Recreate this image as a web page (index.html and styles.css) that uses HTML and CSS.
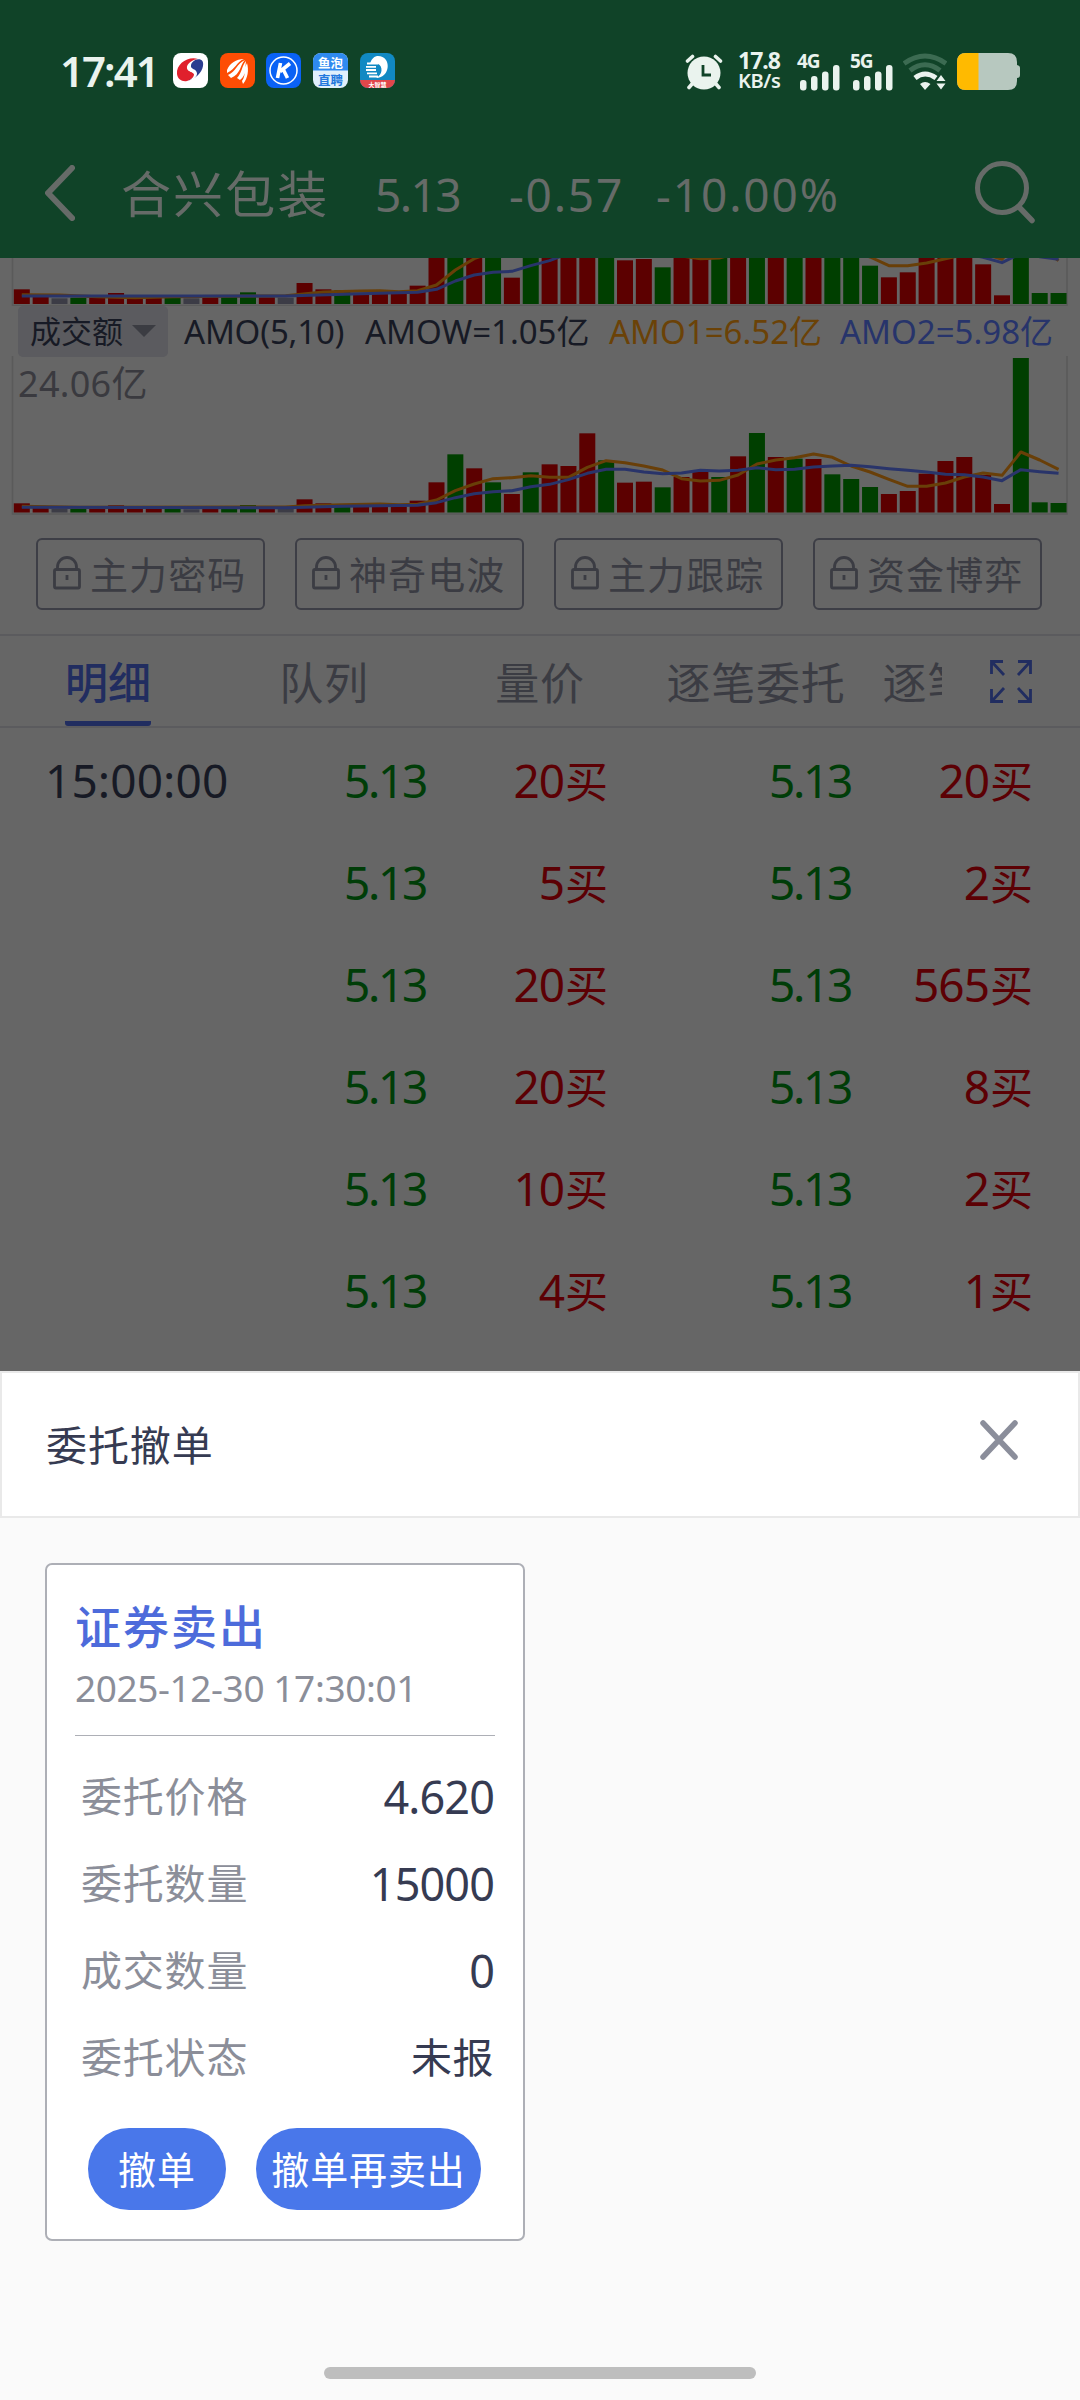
FILE: index.html
```html
<!DOCTYPE html>
<html lang="zh-CN">
<head>
<meta charset="utf-8">
<title>委托撤单</title>
<link rel="stylesheet" href="styles.css">
</head>
<body>
<svg width="0" height="0" class="defs">
  <symbol id="lock" viewBox="0 0 28 34">
    <rect x="1.5" y="13.5" width="25" height="18.5" rx="1.5" fill="none" stroke="currentColor" stroke-width="2.8"/>
    <path d="M4.5 13V11a9.5 9.5 0 0 1 19 0v2M14 19v5" fill="none" stroke="currentColor" stroke-width="2.8"/>
  </symbol>
  <symbol id="bars" viewBox="0 0 40 26">
    <g fill="#eaf3ee"><rect x="0" y="15" width="6.5" height="10.5" rx="3"/><rect x="11" y="11" width="6.5" height="14.5" rx="3"/><rect x="22" y="6.5" width="6.5" height="19" rx="3"/><rect x="33" y="0" width="6.5" height="25.5" rx="3"/></g>
  </symbol>
</svg>
<div class="screen">
  <header class="top">
    <div class="status">
      <div class="status-left">
        <span class="clock">17:41</span>
        <div class="apps">
          <svg class="app" viewBox="0 0 35 35"><rect width="35" height="35" rx="8" fill="#fff"/><path d="M25 6C15 3 3 11 4 21c.5 5 5 8 10 7 5-1 8-4 7-7-1-2-6-3-6-6 0-4 5-7 10-9z" fill="#e0202c"/><path d="M22 7c6-2 9 1 8 6-1 7-8 13-16 15 5-2 9-5 8-8-1-3-7-2-7-6 0-3 3-5 7-7z" fill="#2b3d8f"/><path d="M26 5.500c-6 1-13 5-12 10 1 4 7 3 7 6 0 3-4 6-8 7 6-1 11-4 11-8 0-5-7-4-6-8 0-3 4-6 8-7z" fill="#fff"/></svg>
          <svg class="app" viewBox="0 0 35 35"><rect width="35" height="35" rx="8" fill="#fd4d04"/><path d="M7 17C10 10 16 6 24 6 16 9 16 16 7 20zM8 22c8-3 9-12 17-15-5 5-4 14-14 18zM17 25c5-5 5-13 9-17-1 6 1 14-6 19zM22 28c4-5 2-13 5-18 2 7 1 15-4 21z" fill="#fff"/></svg>
          <svg class="app" viewBox="0 0 35 35"><rect width="35" height="35" rx="8" fill="#0a62f5"/><circle cx="17.5" cy="17.5" r="13.5" fill="none" stroke="#fff" stroke-width="1.5"/><path d="M14.5 10l-3 15M24 10.500l-10 8M17 16l4.500 9" fill="none" stroke="#fff" stroke-width="3.6"/></svg>
          <svg class="app" viewBox="0 0 35 35"><rect width="35" height="35" rx="8" fill="#e0effc"/><path d="M0 17.500V8a8 8 0 0 1 8-8h19a8 8 0 0 1 8 8v9.500z" fill="#2f8af0"/><text x="17.5" y="14.5" class="app-text" fill="#fff">鱼泡</text><text x="17.5" y="31.5" class="app-text" fill="#2378de">直聘</text></svg>
          <svg class="app" viewBox="0 0 35 35"><rect width="35" height="35" rx="8" fill="#1189c3"/><path d="M0 27h35a8 8 0 0 1-8 8H8a8 8 0 0 1-8-8z" fill="#e2474b"/><path d="M17 3c15-1 14 22-1 22 7-3 7-12 2-14h-8c1-4 3-7 7-8z" fill="#fff"/><path d="M7 10.500h11M6 13.800h10M6 17h10M7 20.300h10M9 23.500h9" stroke="#fff" stroke-width="1.8"/><text x="17.5" y="33.5" class="app-tiny" fill="#fff">大智慧</text></svg>
        </div>
      </div>
      <div class="status-right">
        <svg width="38" height="38" viewBox="0 0 38 38"><g stroke="#eaf3ee" stroke-width="3.6" stroke-linecap="round"><path d="M2.5 8l5-4.500M35.500 8l-5-4.500M7 31l-3 3.500M31 31l3 3.500"/></g><circle cx="19" cy="20" r="16.5" fill="#eaf3ee"/><path d="M18 12v10h8" fill="none" stroke="#104328" stroke-width="2.8"/></svg>
        <div class="speed"><span>17.8</span><span class="unit">KB/s</span></div>
        <div class="cell"><span>4G</span><svg width="40" height="26"><use href="#bars"/></svg></div>
        <div class="cell"><span>5G</span><svg width="40" height="26"><use href="#bars"/></svg></div>
        <svg class="wifi" width="44" height="37" viewBox="0 0 44 37"><g fill="none" stroke-width="5"><path d="M1 10.500Q22-4.500 43 10.500" stroke="#3c6b52"/><path d="M7 17.500Q22 6 37 17.500" stroke="#3c6b52"/><path d="M12 25Q22 17 33 25" stroke="#eaf3ee"/></g><path d="M17 31q5-4 10.500 0L22 37zM33.500 28l4.500-6 4.500 6zM33.500 30.500l4.500 6 4.500-6z" fill="#eaf3ee"/></svg>
        <svg width="63" height="37" viewBox="0 0 63 37"><path d="M9 0h42q9 0 9 9v3q3 .5 3 3v7q0 3-3 3v3q0 9-9 9H9q-9 0-9-9V9Q0 0 9 0z" fill="#b7c8bf"/><path d="M21.500 0H9Q0 0 0 9v19q0 9 9 9h12.500z" fill="#ffba00"/></svg>
      </div>
    </div>
    <div class="nav">
      <svg class="back" width="30" height="56" viewBox="0 0 30 56"><path d="M27 3L3 28l24 25" fill="none" stroke="#666b68" stroke-width="6" stroke-linecap="round" stroke-linejoin="round"/></svg>
      <span class="stock">合兴包装</span>
      <span class="num price">5.13</span>
      <span class="num change">-0.57</span>
      <span class="num percent">-10.00%</span>
      <svg class="search" width="62" height="64" viewBox="0 0 62 64"><circle cx="28" cy="28" r="24.5" fill="none" stroke="#666b68" stroke-width="5"/><path d="M45 47l13 13.500" stroke="#666b68" stroke-width="5.5" stroke-linecap="round"/></svg>
    </div>
  </header>

  <main class="page">
    <section class="charts">
      <svg id="volume" width="1080" height="48" viewBox="0 258 1080 48"></svg>
      <div class="legend">
        <div class="picker">成交额<i class="caret"></i></div>
        <span class="l1">AMO(5,10)</span>
        <span class="l2">AMOW=1.05亿</span>
        <span class="l3">AMO1=6.52亿</span>
        <span class="l4">AMO2=5.98亿</span>
      </div>
      <div class="amount">
        <svg id="turnover" width="1080" height="159" viewBox="0 356 1080 159"></svg>
        <span class="peak">24.06亿</span>
      </div>
    </section>

    <section class="locks">
      <div class="lock"><svg width="28" height="34"><use href="#lock"/></svg>主力密码</div>
      <div class="lock"><svg width="28" height="34"><use href="#lock"/></svg>神奇电波</div>
      <div class="lock"><svg width="28" height="34"><use href="#lock"/></svg>主力跟踪</div>
      <div class="lock"><svg width="28" height="34"><use href="#lock"/></svg>资金博弈</div>
    </section>

    <nav class="tabs">
      <div class="tab-strip">
        <div class="tab active"><span>明细</span></div>
        <div class="tab"><span>队列</span></div>
        <div class="tab"><span>量价</span></div>
        <div class="tab"><span>逐笔委托</span></div>
        <div class="tab"><span>逐笔成交</span></div>
      </div>
      <svg class="expand" width="42" height="43" viewBox="0 0 42 43"><path d="M1.500 14V1.500H13M2 2l12 13M28 1.500h12.500V14M40 2L28 15M1.500 29v12.500H13M2 41l12-13M28 41.500h12.500V29M40 41L28 28" fill="none" stroke="#212d60" stroke-width="2.8"/></svg>
    </nav>

    <section class="ticks">
      <div class="tick"><span class="time">15:00:00</span><span class="down">5.13</span><span class="buy">20<b>买</b></span><span class="down">5.13</span><span class="buy">20<b>买</b></span></div>
      <div class="tick"><span class="time"></span><span class="down">5.13</span><span class="buy">5<b>买</b></span><span class="down">5.13</span><span class="buy">2<b>买</b></span></div>
      <div class="tick"><span class="time"></span><span class="down">5.13</span><span class="buy">20<b>买</b></span><span class="down">5.13</span><span class="buy">565<b>买</b></span></div>
      <div class="tick"><span class="time"></span><span class="down">5.13</span><span class="buy">20<b>买</b></span><span class="down">5.13</span><span class="buy">8<b>买</b></span></div>
      <div class="tick"><span class="time"></span><span class="down">5.13</span><span class="buy">10<b>买</b></span><span class="down">5.13</span><span class="buy">2<b>买</b></span></div>
      <div class="tick"><span class="time"></span><span class="down">5.13</span><span class="buy">4<b>买</b></span><span class="down">5.13</span><span class="buy">1<b>买</b></span></div>
    </section>
  </main>

  <section class="sheet">
    <div class="sheet-head">
      <h1>委托撤单</h1>
      <svg class="close" width="40" height="42" viewBox="0 0 40 42"><path d="M4 4l32 34M36 4L4 38" stroke="#8b8e9b" stroke-width="5.5" stroke-linecap="round"/></svg>
    </div>
    <div class="sheet-body">
      <article class="card">
        <h2>证券卖出</h2>
        <p class="date">2025-12-30 17:30:01</p>
        <dl>
          <div><dt>委托价格</dt><dd>4.620</dd></div>
          <div><dt>委托数量</dt><dd>15000</dd></div>
          <div><dt>成交数量</dt><dd>0</dd></div>
          <div><dt>委托状态</dt><dd class="word">未报</dd></div>
        </dl>
        <div class="actions"><button class="cancel">撤单</button><button class="resell">撤单再卖出</button></div>
      </article>
      <div class="home"></div>
    </div>
  </section>
</div>
<script src="charts.js"></script>
</body>
</html>
```
FILE: styles.css
```css
* { box-sizing: border-box; margin: 0; padding: 0; }
body { width: 1080px; height: 2400px; overflow: hidden; background: #666; font-family: "Noto Sans", "Noto Sans CJK SC", sans-serif; color: #171a25; }
svg { display: block; flex: none; }
.defs { position: absolute; }
.screen { display: flex; flex-direction: column; height: 2400px; }

.top { height: 258px; background: #104328; }
.status { height: 130px; padding: 52px 60px 0 60px; display: flex; justify-content: space-between; color: #eaf3ee; }
.status-left, .status-right { display: flex; align-items: flex-start; }
.clock { width: 113px; font-size: 42px; font-weight: 600; line-height: 37px; letter-spacing: -2px; }
.apps { display: flex; gap: 11.7px; padding-top: 1px; }
.app { width: 35px; height: 35px; }
.app-text { font-size: 12.5px; font-weight: 700; text-anchor: middle; }
.app-tiny { font-size: 6px; font-weight: 700; text-anchor: middle; }
.status-right { padding-top: 1px; }
.speed { display: flex; flex-direction: column; width: 45px; margin: -2px 14px 0 15px; font-size: 23px; font-weight: 700; line-height: 19px; letter-spacing: -1px; }
.speed .unit { font-size: 20px; font-weight: 600; line-height: 22px; letter-spacing: -.4px; }
.cell { display: flex; flex-direction: column; width: 43px; margin-right: 10px; }
.cell span { font-size: 19px; font-weight: 700; line-height: 16px; height: 12px; letter-spacing: -1px; }
.cell svg { margin-left: 3px; }
.wifi { margin-right: 10px; }

.nav { height: 128px; display: flex; align-items: center; padding-left: 45px; font-size: 46px; line-height: 60px; color: #666b68; }
.back { margin-top: -2px; }
.stock { width: 254px; margin-left: 46px; font-size: 50px; letter-spacing: 2.1px; }
.price { width: 134px; letter-spacing: -1.6px; }
.change { width: 147px; letter-spacing: 1.8px; }
.percent { width: 318px; letter-spacing: 1.9px; }
.search { margin-top: -4px; }

.page { height: 1113px; flex: none; overflow: hidden; }
.charts { height: 257px; }
.legend { display: flex; height: 50px; padding-left: 18px; font-size: 33px; line-height: 52px; white-space: nowrap; }
.picker { display: flex; align-items: center; width: 150px; height: 51px; padding-left: 12px; border-radius: 5px; background: #5b5b5f; font-size: 31px; line-height: 48px; }
.picker { padding-bottom: 2px; }
.caret { width: 0; height: 0; margin-left: 9px; border: 12px solid transparent; border-top-color: #3b3c42; border-bottom: 0; }
.l1 { width: 181px; margin-left: 16px; letter-spacing: -.2px; }
.l2 { width: 244px; }
.l3 { width: 231px; color: #6b4207; }
.l4 { color: #27346b; }
.amount { position: relative; height: 159px; }
.peak { position: absolute; left: 18px; top: 5px; font-size: 36px; line-height: 46px; letter-spacing: .3px; color: #3a3a3f; }

.locks { display: flex; gap: 30px; height: 119px; padding: 23px 36px 0; }
.lock { display: flex; align-items: center; width: 229px; height: 72px; padding-left: 15px; border: 2px solid #3d3e46; border-radius: 6px; font-size: 38px; line-height: 60px; letter-spacing: 1.1px; color: #3b3c43; white-space: nowrap; }
.lock svg { margin-right: 9px; margin-top: -3px; }

.tabs { display: flex; align-items: center; height: 94px; border: solid #5b5b5e; border-width: 2px 0; }
.tab-strip { display: flex; width: 942px; height: 90px; overflow: hidden; }
.tab { display: flex; flex: 0 0 216px; justify-content: center; font-size: 44px; line-height: 94px; letter-spacing: .8px; color: #3b3c43; }
.tab span { height: 90px; }
.active { font-size: 43px; font-weight: 500; letter-spacing: 0; color: #212d60; }
.active span { border-bottom: 5px solid #212d60; border-radius: 3px; }
.expand { margin-left: 48px; }

.ticks { padding-top: 1px; }
.tick { display: grid; grid-template-columns: 240px 141px 182px 243px 182px; height: 102px; padding-left: 45px; font-size: 46px; line-height: 102px; }
.tick span { text-align: right; letter-spacing: -1px; white-space: nowrap; }
.tick .time { text-align: left; letter-spacing: .1px; }
.tick .down { color: #003d08; letter-spacing: -2.3px; }
.tick .buy { color: #5c0004; }
.tick b { margin-left: 1px; font-size: 43px; font-weight: 400; letter-spacing: 0; }

.sheet { display: flex; flex-direction: column; flex: 1; background: #fafafa; }
.sheet-head { display: flex; align-items: center; justify-content: space-between; height: 147px; padding: 0 59px 0 44px; border: 2px solid #e9e9e9; background: #fff; }
.sheet-head h1 { margin-top: 1px; font-size: 41px; font-weight: 400; line-height: 60px; letter-spacing: .9px; color: #363b52; }
.close { margin-top: -9px; }
.sheet-body { display: flex; flex-direction: column; flex: 1; padding: 45px 45px 21px; }
.card { width: 480px; height: 678px; padding: 29px 28px; border: 2px solid #adafb6; border-radius: 7px; background: #fff; }
.card h2 { font-size: 46px; font-weight: 500; line-height: 64px; letter-spacing: 2px; color: #4d6bdb; }
.date { height: 78px; padding-top: 3px; border-bottom: 1px solid #adafb6; font-size: 37px; line-height: 54px; letter-spacing: -.4px; color: #8b8e99; }
dl { padding: 17px 1px 0 6px; }
dl div { display: flex; justify-content: space-between; height: 87px; line-height: 87px; }
dt { font-size: 41px; letter-spacing: .8px; color: #8b8e99; }
dd { font-size: 45px; letter-spacing: -.9px; color: #363b52; }
dd.word { font-size: 41px; letter-spacing: .5px; }
.actions { display: flex; gap: 30px; padding: 27px 0 0 13px; }
.actions button { height: 82px; border: 0; border-radius: 41px; background: #4977ea; color: #fff; font: 38px/82px "Noto Sans", "Noto Sans CJK SC", sans-serif; letter-spacing: .9px; white-space: nowrap; }
.cancel { width: 138px; }
.resell { width: 225px; }
.home { align-self: center; width: 432px; height: 12px; margin-top: auto; border-radius: 6px; background: #bebebe; }
```
FILE: charts.js
```js
const NS = "http://www.w3.org/2000/svg";
const COLORS = { r: "#5c0000", g: "#003f00", n: "#3c3c46" };
const SIDES = "rrngrrrrgnrggrnrrgrrrrrgrgrgrrrgrrgrrgrgrgrgggrrrrrrrggg".split("");
const X0 = 13.8, PITCH = 18.85, WIDTH = 16;

function add(svg, tag, attrs) {
  const el = document.createElementNS(NS, tag);
  for (const key in attrs) el.setAttribute(key, attrs[key]);
  svg.appendChild(el);
}

// Heights and averages are thirds of a pixel measured down from y = 250.
function draw(id, base, tops, fast, slow) {
  const svg = document.getElementById(id);
  const y = v => 250 + v / 3;
  add(svg, "path", { d: `M12.500 250V${base + 1.5}H1067V250`, fill: "none", stroke: "#5a5a5a", "stroke-width": 1.5 });
  tops.forEach((t, i) => add(svg, "rect", { x: X0 + i * PITCH, y: y(t), width: WIDTH, height: base - y(t), fill: COLORS[SIDES[i]] }));
  const line = (pts, stroke) => add(svg, "polyline", {
    points: pts.map(([i, v]) => `${X0 + WIDTH / 2 + i * PITCH},${y(v)}`).join(" "),
    fill: "none", stroke, "stroke-width": 3, "stroke-linejoin": "round"
  });
  line(fast, "#693f08");
  line(slow, "#29346a");
}

draw("volume", 304,
  [118,140,145,143,143,129,142,141,144,145,141,140,127,142,143,99,118,121,130,130,130,107,0,0,0,0,83,0,0,0,0,0,31,27,52,0,0,0,0,0,0,0,0,0,0,47,82,67,0,0,0,43,136,0,129,129],
  [[0,134],[2,135],[4,140],[6,143],[8,140],[14,137],[16,126],[18,123],[19,122],[20,125],[21,122],[22,105],[23,60],[24,26],[25,5],[34,5],[35,18],[36,26],[37,24],[38,8],[44,0],[45,21],[46,47],[47,47],[48,39],[49,26],[50,14],[51,10],[52,28],[53,-40],[54,-10],[55,32]],
  [[0,138],[14,138],[18,131],[21,127],[22,118],[23,93],[24,75],[25,67],[26,64],[27,47],[28,32],[29,10],[49,5],[50,10],[51,22],[52,38],[53,10],[54,20],[55,28]]);

draw("turnover", 512.5,
  [760,774,777,777,777,766,775,775,777,778,777,774,765,775,777,748,760,764,770,770,770,752,697,613,655,697,732,667,643,648,550,631,698,695,712,681,666,681,619,549,621,626,627,673,687,711,732,723,671,633,621,675,762,324,757,759],
  [[0,769],[3,772],[14,771],[15,767],[17,764],[19,762],[20,764],[21,763],[22,750],[23,722],[24,702],[25,686],[26,683],[27,677],[28,682],[29,682],[30,652],[31,632],[32,638],[33,648],[34,660],[35,686],[36,693],[37,691],[38,675],[39,642],[40,630],[41,623],[42,612],[43,622],[44,648],[45,666],[46,688],[47,709],[48,709],[49,699],[50,681],[51,669],[52,676],[53,606],[54,630],[55,658]],
  [[0,772],[14,773],[17,769],[21,766],[22,758],[23,743],[24,731],[25,725],[26,722],[27,710],[28,703],[29,689],[30,670],[31,658],[32,658],[33,666],[34,671],[35,669],[36,661],[37,663],[38,661],[39,653],[40,659],[41,658],[42,651],[43,648],[44,646],[45,650],[46,656],[47,661],[48,666],[49,673],[50,674],[51,681],[52,692],[53,659],[54,665],[55,670]]);
```
